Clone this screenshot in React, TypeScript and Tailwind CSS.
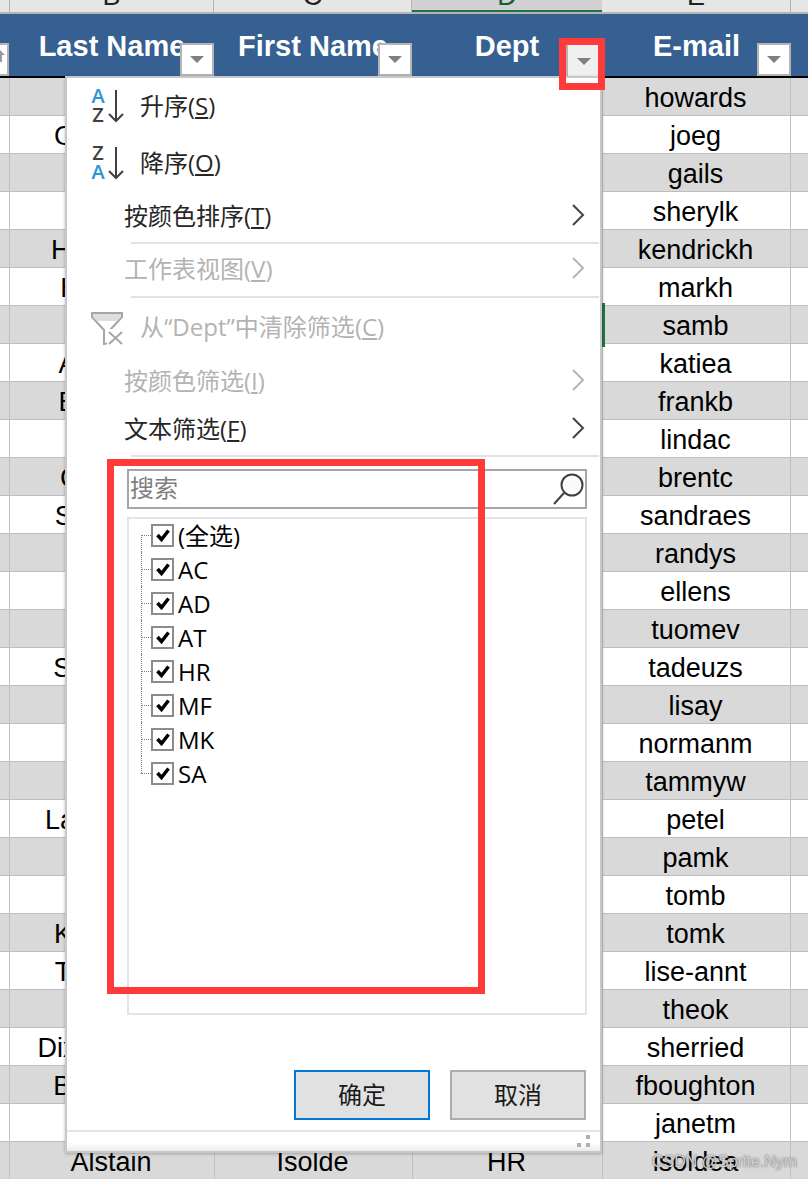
import type { ReactNode } from 'react';

const rows = [
  ['', 'howards'],
  ['Gonzalez', 'joeg'],
  ['', 'gails'],
  ['', 'sherylk'],
  ['Hendricks', 'kendrickh'],
  ['Hoffman', 'markh'],
  ['', 'samb'],
  ['Andrews', 'katiea'],
  ['Bowman', 'frankb'],
  ['', 'lindac'],
  ['Cochran', 'brentc'],
  ['Simmons', 'sandraes'],
  ['', 'randys'],
  ['', 'ellens'],
  ['', 'tuomev'],
  ['Sorensen', 'tadeuzs'],
  ['', 'lisay'],
  ['', 'normanm'],
  ['', 'tammyw'],
  ['Lawrenson', 'petel'],
  ['', 'pamk'],
  ['', 'tomb'],
  ['Kowalsky', 'tomk'],
  ['Thomsen', 'lise-annt'],
  ['', 'theok'],
  ['Dixon-Smith', 'sherried'],
  ['Boughton', 'fboughton'],
  ['', 'janetm'],
  ['Alstain', 'isoldea', 'Isolde', 'HR'],
];

const treeItems = ['(全选)', 'AC', 'AD', 'AT', 'HR', 'MF', 'MK', 'SA'];

function FilterButton({ className }: { className: string }) {
  return (
    <div className={`absolute bottom-0 flex h-[33px] items-center justify-center border-2 border-[#b4b4b4] bg-white ${className}`}>
      <div className="h-0 w-0 border-x-[7px] border-t-[7px] border-x-transparent border-t-[#7f7f7f]" />
    </div>
  );
}

function Chevron({ disabled }: { disabled?: boolean }) {
  return (
    <svg width="14" height="24" viewBox="0 0 14 24" fill="none" className="mb-[4px]">
      <path d="M2 2 L12 12 L2 22" stroke={disabled ? '#b5b5b5' : '#444444'} strokeWidth="2" />
    </svg>
  );
}

function SortIcon({ top, bottom, topColor, bottomColor }: { top: string; bottom: string; topColor: string; bottomColor: string }) {
  return (
    <svg width="34" height="36" viewBox="0 0 34 36" className="shrink-0">
      <text x="8" y="14" textAnchor="middle" fontSize="20" fontWeight="600" fontFamily="Open Sans, sans-serif" fill={topColor}>{top}</text>
      <text x="8" y="33" textAnchor="middle" fontSize="20" fontWeight="600" fontFamily="Open Sans, sans-serif" fill={bottomColor}>{bottom}</text>
      <path d="M26 1 V32 M19 25 L26 32 L33 25" fill="none" stroke="#404040" strokeWidth="2" />
    </svg>
  );
}

function Label({ text, hotkey }: { text: string; hotkey: string }) {
  return (
    <span>
      {text}(<span className="underline underline-offset-2">{hotkey}</span>)
    </span>
  );
}

function Separator() {
  return <div className="ml-[64px] mr-px h-[2px] shrink-0 bg-[#e2e2e2]" />;
}

function MenuRow({ height, disabled, arrow, icon, children }: { height: string; disabled?: boolean; arrow?: boolean; icon?: ReactNode; children: ReactNode }) {
  return (
    <div className={`flex shrink-0 items-center justify-between pr-[15px] ${height} ${disabled ? 'text-[#b3b3b3]' : 'text-[#262626]'}`}>
      <div className={`flex items-center ${icon ? 'pl-[23px]' : 'pl-[57px]'}`}>
        {icon}
        <span className={`mb-[2px] ${icon ? 'ml-[16px]' : ''}`}>{children}</span>
      </div>
      {arrow && <Chevron disabled={disabled} />}
    </div>
  );
}

function TreeRow({ label, index, total }: { label: string; index: number; total: number }) {
  const line = index === 0 ? 'top-1/2 bottom-0' : index === total - 1 ? 'top-0 bottom-1/2' : 'top-0 bottom-0';
  return (
    <div className="flex h-[34px] items-center text-[24px] leading-none text-black">
      <div className="relative ml-[12px] h-full w-[10px] shrink-0">
        <div className={`absolute left-0 border-l border-dotted border-[#808080] ${line}`} />
        <div className="absolute left-0 right-0 top-1/2 border-t border-dotted border-[#808080]" />
      </div>
      <div className="flex h-[23px] w-[23px] shrink-0 items-center justify-center border-2 border-[#8c8c8c] bg-white">
        <svg width="14" height="14" viewBox="0 0 14 14">
          <path d="M1.5 7 L5.5 11.5 L12.5 2.5" fill="none" stroke="#000000" strokeWidth="3.5" />
        </svg>
      </div>
      <span className="ml-[4px] mt-[2px]">{label}</span>
    </div>
  );
}

function FilterMenu() {
  return (
    <div className="absolute left-[65px] top-[76px] flex h-[1077px] w-[537px] flex-col border-[2px] border-[#c8c8c8] bg-white font-['Open_Sans','Noto_Sans_CJK_SC',sans-serif] text-[24px] leading-none shadow-[0_1px_3px_rgba(0,0,0,0.25)]">
      <MenuRow height="h-[57px]" icon={<SortIcon top="A" bottom="Z" topColor="#2b94d4" bottomColor="#404040" />}>
        <Label text="升序" hotkey="S" />
      </MenuRow>
      <MenuRow height="h-[57px]" icon={<SortIcon top="Z" bottom="A" topColor="#404040" bottomColor="#2b94d4" />}>
        <Label text="降序" hotkey="O" />
      </MenuRow>
      <MenuRow height="h-[50px]" arrow>
        <Label text="按颜色排序" hotkey="T" />
      </MenuRow>
      <Separator />
      <MenuRow height="h-[52px]" disabled arrow>
        <Label text="工作表视图" hotkey="V" />
      </MenuRow>
      <Separator />
      <MenuRow
        height="h-[60px]"
        disabled
        icon={
          <svg width="34" height="34" viewBox="0 0 34 34" fill="none" className="shrink-0">
            <path d="M2 2 H32 V6 L20 19 V32 L14 33 V19 L2 6 Z" fill="#ffffff" stroke="#a6a6a6" strokeWidth="2" />
            <path d="M3 3 H31 V6 L27 10 H7 L3 6 Z" fill="#dedede" />
            <rect x="17" y="18" width="17" height="16" fill="#ffffff" />
            <path d="M19 21 L32 33 M32 21 L19 33" stroke="#a6a6a6" strokeWidth="2" />
          </svg>
        }
      >
        <Label text="从“Dept”中清除筛选" hotkey="C" />
      </MenuRow>
      <MenuRow height="h-[47px]" disabled arrow>
        <Label text="按颜色筛选" hotkey="I" />
      </MenuRow>
      <MenuRow height="h-[50px]" arrow>
        <Label text="文本筛选" hotkey="F" />
      </MenuRow>
      <Separator />

      <div className="ml-[60px] mr-[13px] mt-[12px] flex h-[40px] shrink-0 items-center justify-between border-2 border-[#a6a6a6] pl-px text-[#7f7f7f]">
        <span className="mb-[2px]">搜索</span>
        <svg width="34" height="36" viewBox="0 0 34 36" fill="none" className="-mr-px">
          <circle cx="20" cy="14" r="10.5" fill="#fafafa" stroke="#404040" strokeWidth="2" />
          <path d="M12 22 L2 33" stroke="#404040" strokeWidth="2" />
        </svg>
      </div>

      <div className="ml-[60px] mr-[13px] mt-[8px] h-[498px] shrink-0 border-2 border-[#e3e3e8]">
        <div className="-mt-px">
          {treeItems.map((item, i) => (
            <TreeRow key={item} label={item} index={i} total={treeItems.length} />
          ))}
        </div>
      </div>

      <div className="mr-[14px] mt-[55px] flex shrink-0 justify-end gap-[20px] text-[#1a1a1a]">
        <div className="flex h-[50px] w-[136px] items-center justify-center border-2 border-[#0078d7] bg-[#e1e1e1]">确定</div>
        <div className="flex h-[50px] w-[136px] items-center justify-center border-2 border-[#adadad] bg-[#e1e1e1]">取消</div>
      </div>

      <div className="relative mt-[10px] flex-1 border-t-2 border-[#dfe8ee] bg-gradient-to-b from-white from-55% to-[#ebebeb]">
        <div className="absolute bottom-[4px] right-[10px] grid grid-cols-2 gap-x-[5px] gap-y-[4px]">
          <span className="h-[4px] w-[4px]" />
          <span className="h-[4px] w-[4px] bg-[#b0b0b0]" />
          <span className="h-[4px] w-[4px] bg-[#b0b0b0]" />
          <span className="h-[4px] w-[4px] bg-[#b0b0b0]" />
        </div>
      </div>
    </div>
  );
}

export default function App() {
  return (
    <div className="relative h-[1179px] w-[808px] overflow-hidden bg-white font-['Liberation_Sans',sans-serif] text-black">
      {/* column letters */}
      <div className="flex h-[14px] border-b-2 border-[#b4b4b4] bg-[#e6e6e6] text-[27px] leading-none text-[#222222]">
        <div className="w-[10px] border-r border-[#b4b4b4]" />
        <div className="flex w-[204px] justify-center overflow-hidden border-r border-[#b4b4b4]"><span className="-mt-[17px]">B</span></div>
        <div className="flex w-[198px] justify-center overflow-hidden border-r border-[#b4b4b4]"><span className="-mt-[17px]">C</span></div>
        <div className="flex w-[190px] justify-center overflow-hidden border-b-2 border-[#217346] bg-[#d2d2d2] text-[#1a5c38]"><span className="-mt-[17px]">D</span></div>
        <div className="flex w-[189px] justify-center overflow-hidden border-r border-[#b4b4b4]"><span className="-mt-[17px]">E</span></div>
        <div className="flex-1" />
      </div>

      {/* table header */}
      <div className="flex h-[64px] border-b-2 border-black bg-[#366092] text-[29px] font-bold leading-none text-white">
        <div className="relative w-[10px]">
          <div className="absolute bottom-0 left-0 h-[33px] w-[9px] border-y-2 border-r-2 border-[#b4b4b4] bg-white">
            <svg width="7" height="12" viewBox="0 0 7 12" className="mt-[5px]">
              <path d="M0 0 L5 5 H2 V12 H0 Z" fill="#9a9a9a" />
            </svg>
          </div>
        </div>
        <div className="relative flex w-[204px] items-center justify-center pt-[2px]">
          <span>Last Name</span>
          <FilterButton className="right-0 w-[34px]" />
        </div>
        <div className="relative flex w-[198px] items-center justify-center pt-[2px]">
          <span>First Name</span>
          <FilterButton className="right-0 w-[34px]" />
        </div>
        <div className="flex w-[190px] items-center justify-center pt-[2px]">Dept</div>
        <div className="relative flex w-[189px] items-center justify-center pt-[2px]">
          <span>E-mail</span>
          <FilterButton className="right-0 w-[34px]" />
        </div>
        <div className="flex-1" />
      </div>

      {/* data rows */}
      {rows.map(([last, email, first, dept], i) => (
        <div key={email} className={`flex h-[38px] border-b border-[#bfbfbf] pt-[4px] text-[27px] leading-none ${i % 2 === 0 ? 'bg-[#d9d9d9]' : 'bg-white'}`}>
          <div className="-mt-[4px] w-[10px] border-r border-[#bfbfbf]" />
          <div className="flex w-[204px] items-center justify-center whitespace-nowrap pr-[2px]">{last}</div>
          <div className="-mt-[4px] flex w-[198px] items-center justify-center border-l border-[#bfbfbf] pr-[2px] pt-[4px]">{first}</div>
          <div className="-mt-[4px] flex w-[190px] items-center justify-center border-l border-[#bfbfbf] pr-[2px] pt-[4px]">{dept}</div>
          <div className="-mt-[4px] flex w-[189px] items-center justify-center border-x border-[#bfbfbf] pr-[2px] pt-[4px]">{email}</div>
          <div className="flex-1" />
        </div>
      ))}

      {/* selected cell edge */}
      <div className="absolute left-[602px] top-[303px] h-[44px] w-[3px] bg-[#217346]" />

      {/* pressed Dept button */}
      <div className="absolute left-[566px] top-[45px] flex h-[32px] w-[33px] items-center justify-center border-l-2 border-[#b4b4b4] bg-[#f0f0f0]">
        <div className="h-0 w-0 border-x-[7px] border-t-[7px] border-x-transparent border-t-[#7f7f7f]" />
      </div>

      <FilterMenu />

      {/* red annotations */}
      <div className="absolute left-[559px] top-[38px] h-[52px] w-[46px] border-[7px] border-[#fe3a3a]" />
      <div className="absolute left-[107px] top-[459px] h-[535px] w-[378px] border-[7px] border-[#fe3a3a]" />

      {/* watermark */}
      <div className="absolute left-[652px] top-[1154px] whitespace-nowrap text-[16px] leading-none text-[#d0d0d0] [text-shadow:0_0_2px_rgba(60,60,60,0.8)]">
        CSDN @Sprite.Nym
      </div>
    </div>
  );
}
